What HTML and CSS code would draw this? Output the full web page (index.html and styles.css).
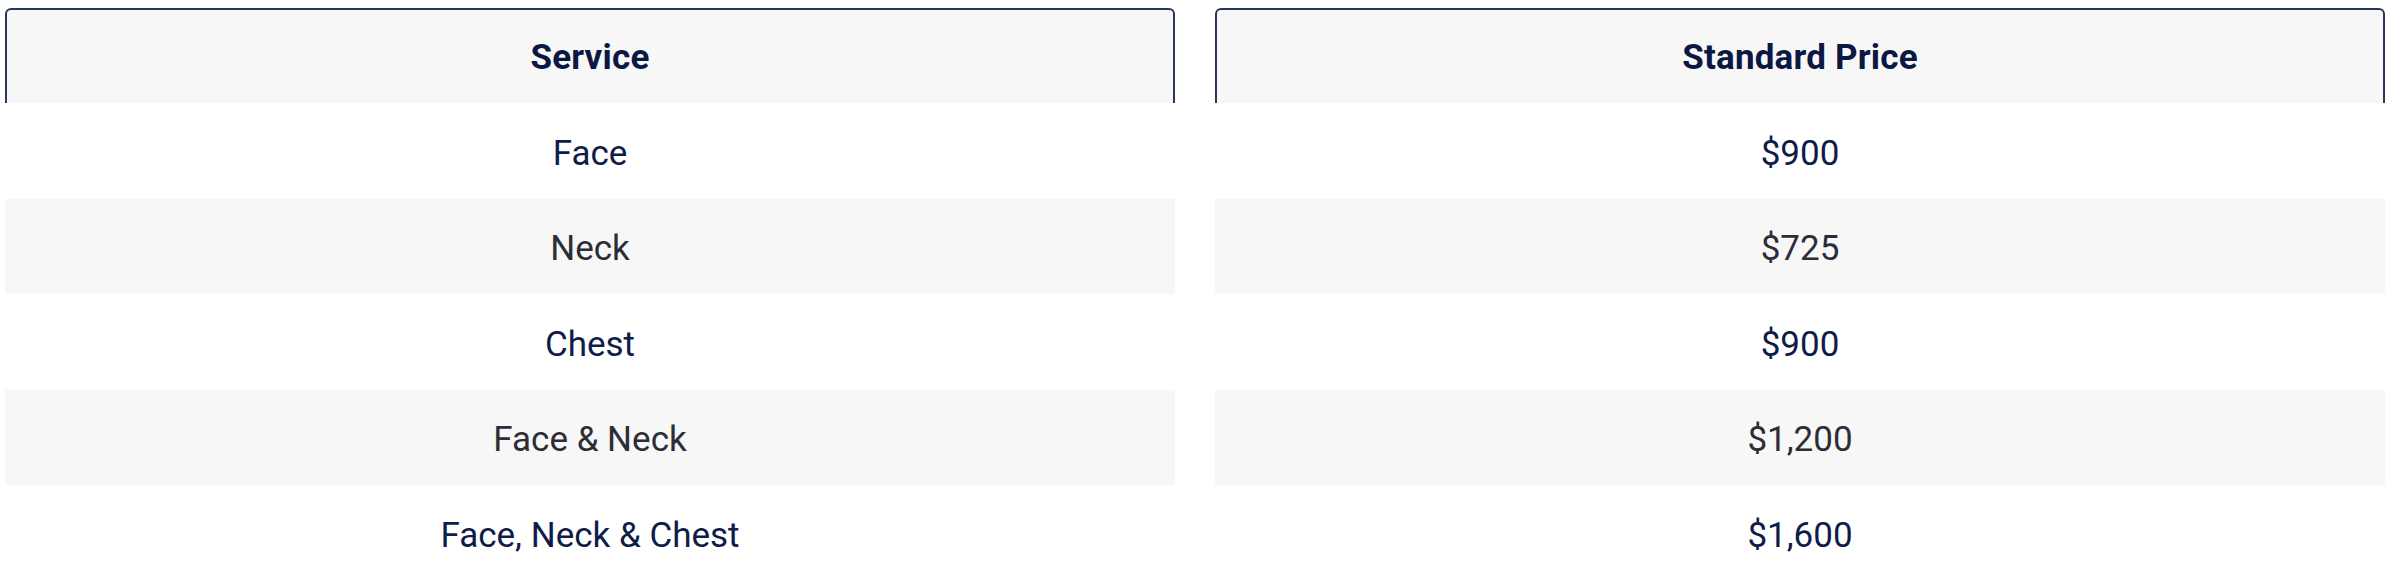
FILE: index.html
```html
<!DOCTYPE html>
<html lang="en">
<head>
<meta charset="utf-8">
<title>Pricing</title>
<link rel="stylesheet" href="styles.css">
</head>
<body>
<div class="price-table">
  <div class="head">Service</div>
  <div class="head">Standard Price</div>

  <div class="cell">Face</div>
  <div class="cell">$900</div>

  <div class="cell alt">Neck</div>
  <div class="cell alt">$725</div>

  <div class="cell">Chest</div>
  <div class="cell">$900</div>

  <div class="cell alt">Face &amp; Neck</div>
  <div class="cell alt">$1,200</div>

  <div class="cell">Face, Neck &amp; Chest</div>
  <div class="cell">$1,600</div>
</div>
</body>
</html>
```
FILE: styles.css
```css
html, body {
  margin: 0;
  padding: 0;
  background: #ffffff;
}

body {
  font-family: Roboto, "Noto Sans", sans-serif;
  overflow: hidden;
}

.price-table {
  display: grid;
  grid-template-columns: 1170px 1170px;
  grid-auto-rows: 95.5px;
  grid-template-rows: 95px;
  column-gap: 40px;
  margin: 8px 0 0 5px;
}

.head {
  display: flex;
  align-items: center;
  justify-content: center;
  padding-top: 2px;
  background: #f7f7f7;
  border: 2px solid #27375f;
  border-bottom: none;
  border-radius: 6px 6px 0 0;
  font-weight: 700;
  font-size: 35px;
  letter-spacing: 0.2px;
  color: #0b1843;
}

.cell {
  display: flex;
  align-items: center;
  justify-content: center;
  padding-top: 5px;
  font-size: 35px;
  font-weight: 400;
  color: #0f1c48;
  background: #ffffff;
}

.cell.alt {
  background: #f7f7f7;
  color: #2c2d36;
}
```
